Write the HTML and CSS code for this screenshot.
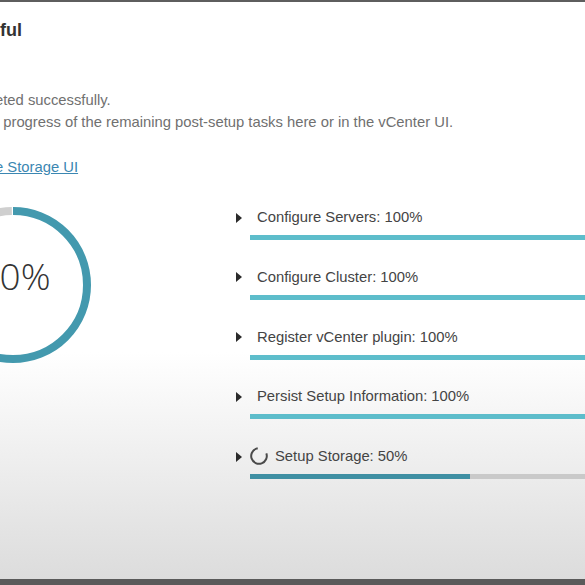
FILE: index.html
```html
<!DOCTYPE html>
<html lang="en">

<head>
    <meta charset="UTF-8">
    <meta name="viewport" content="width=device-width, initial-scale=1.0">
    <title>Setup Successful</title>
    <link rel="stylesheet" href="styles.css">
</head>

<body>
    <div class="modal">
        <!-- header -->
        <div class="modal-header">
            <h3 class="modal-title">ful</h3>
        </div>
        <!-- body -->
        <div class="modal-body">
            <div class="intro">
                <p class="msg">
                    eted successfully.
                    <br>
                    &nbsp;&nbsp;progress of the remaining post-setup tasks here or in the vCenter UI.
                </p>
                <p class="launch"><a href="#">e Storage UI</a></p>
            </div>

            <div class="progress-area">
                <div class="overall">
                    <svg class="donut" width="156" height="156" viewBox="0 0 156 156">
                        <g transform="rotate(-90 78 78)">
                            <circle class="donut-rest" cx="78" cy="78" r="74" stroke-dasharray="0 420.5 42.5 2"></circle>
                            <circle class="donut-done" cx="78" cy="78" r="74" stroke-dasharray="418.5 46.5"></circle>
                        </g>
                    </svg>
                    <div class="overall-value">90%</div>
                </div>

                <ul class="tasks">
                    <li class="task">
                        <div class="task-head"><span class="caret"></span><span class="task-name">Configure Servers: 100%</span></div>
                        <div class="bar"><div class="bar-fill" style="width: 100%"></div></div>
                    </li>
                    <li class="task">
                        <div class="task-head"><span class="caret"></span><span class="task-name">Configure Cluster: 100%</span></div>
                        <div class="bar"><div class="bar-fill" style="width: 100%"></div></div>
                    </li>
                    <li class="task">
                        <div class="task-head"><span class="caret"></span><span class="task-name">Register vCenter plugin: 100%</span></div>
                        <div class="bar"><div class="bar-fill" style="width: 100%"></div></div>
                    </li>
                    <li class="task">
                        <div class="task-head"><span class="caret"></span><span class="task-name">Persist Setup Information: 100%</span></div>
                        <div class="bar"><div class="bar-fill" style="width: 100%"></div></div>
                    </li>
                    <li class="task running">
                        <div class="task-head">
                            <span class="caret"></span>
                            <svg class="spinner" width="18" height="18" viewBox="0 0 18 18">
                                <circle cx="9" cy="9" r="7.8" transform="rotate(-20 9 9)" stroke-dasharray="38 11"></circle>
                            </svg>
                            <span class="task-name">Setup Storage: 50%</span>
                        </div>
                        <div class="bar"><div class="bar-fill" style="width: 50%"></div></div>
                    </li>
                </ul>
            </div>
        </div>
    </div>
    <div class="taskbar"></div>
</body>

</html>
```

FILE: styles.css
```css
* {
    margin: 0;
    padding: 0;
    box-sizing: border-box;
}

html,
body {
    height: 100%;
}

body {
    font-family: "Liberation Sans", Arial, sans-serif;
    font-size: 14.8px;
    color: #444;
    overflow: hidden;
    display: flex;
    flex-direction: column;
}

/* modal */
.modal {
    flex: 1;
    border-top: 2px solid #5e5e5e;
    background: linear-gradient(to bottom, #fff 0, #fff 350px, #dcdcdc 100%);
    overflow: hidden;
}

.modal-header {
    padding-top: 16px;
}

.modal-title {
    font-size: 18px;
    line-height: 24px;
    font-weight: bold;
    color: #333;
}

.intro {
    margin-left: -5px;
    white-space: nowrap;
}

.msg {
    margin-top: 47px;
    line-height: 22px;
    color: #707070;
}

.launch {
    margin-top: 23px;
    line-height: 22px;
}

.launch a {
    color: #3b87b2;
}

/* progress */
.progress-area {
    margin-top: 29px;
    display: grid;
    grid-template-columns: 236px 1fr;
}

.overall {
    width: 156px;
    height: 156px;
    margin-left: -65.5px;
    display: grid;
    place-items: center;
}

.donut,
.overall-value {
    grid-area: 1 / 1;
}

.donut circle {
    fill: none;
    stroke-width: 8;
}

.donut-rest {
    stroke: #cfcfcf;
}

.donut-done {
    stroke: #4399ae;
}

.overall-value {
    font-family: "Open Sans", "Liberation Sans", sans-serif;
    font-weight: 300;
    font-size: 37px;
    color: #333;
    margin-left: 4px;
    padding-bottom: 20px;
}

.tasks {
    list-style: none;
    display: flex;
    flex-direction: column;
    gap: 26.75px;
}

.task-head {
    display: flex;
    align-items: center;
    height: 20px;
    white-space: nowrap;
}

.caret {
    width: 0;
    height: 0;
    border-top: 5px solid transparent;
    border-bottom: 5px solid transparent;
    border-left: 6px solid #2b2b2b;
    margin-right: 15px;
    margin-top: 1px;
}

.task-name {
    color: #444;
}

.running .caret {
    margin-right: 8px;
}

.spinner {
    margin-right: 7px;
}

.spinner circle {
    fill: none;
    stroke: #4a4a4a;
    stroke-width: 2;
}

.bar {
    width: 440px;
    height: 5px;
    margin: 8px 0 0 14px;
    background-color: #c9c9c9;
}

.bar-fill {
    height: 100%;
    background-color: #5dbdcb;
}

.running .bar-fill {
    background-color: #3f8fa3;
}

.taskbar {
    height: 6px;
    background-color: #5a5a5a;
}
```
